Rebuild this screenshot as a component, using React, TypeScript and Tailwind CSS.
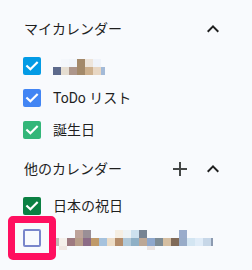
import React from "react";

const Check = () => (
  <svg width="18" height="18" viewBox="0 0 18 18" className="block">
    <path d="M4.2 9.2 L7.4 12.3 L13.9 5.8" fill="none" stroke="#fff" strokeWidth="2.2" strokeLinecap="square" />
  </svg>
);

const Box = ({ color }: { color: string }) => (
  <div className="w-[18px] h-[18px] rounded-[2px] shrink-0" style={{ backgroundColor: color }}>
    <Check />
  </div>
);

const ChevronUp = () => (
  <svg width="24" height="24" viewBox="0 0 24 24" className="block">
    <path d="M12 8l-6 6 1.41 1.41L12 10.83l4.59 4.58L18 14z" fill="#1f1f1f" />
  </svg>
);

const Plus = () => (
  <svg width="24" height="24" viewBox="0 0 24 24" className="block">
    <path d="M19 13h-6v6h-2v-6H5v-2h6V5h2v6h6v2z" fill="#444746" />
  </svg>
);

type R = [number, number, number, number, string];

const m1: R[] = [
  [0, 8, 8, 8, "#5d6a8c"],
  [8, 8, 8, 8, "#e6ded2"],
  [16, 8, 8, 8, "#ad968b"],
  [24, 8, 8, 8, "#a3896a"],
  [32, 8, 8, 8, "#cdb08e"],
  [40, 8, 8, 8, "#e8d7c4"],
  [48, 8, 4, 8, "#a3bad8"],
  [8, 0, 8, 8, "#f4f7fb"],
  [16, 0, 8, 8, "#f1f5fa"],
  [24, 0, 8, 8, "#a3896a"],
  [32, 0, 8, 8, "#ede5dc"],
  [40, 0, 8, 8, "#eff3fa"],
];

const midColors = [
  "#c0bbb5", "#f5f0eb", "#9e7a80", "#b89e8a", "#8c6b86", "#c09a6a", "#a6c2dd", "#ecdcc6",
  "#b48c6a", "#b0c8d8", "#8fb0c6", "#bca796", "#8ea7cc", "#7d8b94", "#d5bea1", "#806a58",
  "#98abc8", "#d3e5f2", "#e0ecf8", "#c7d7e8",
];

const m2: R[] = [
  ...midColors.map((c, i) => [i * 8, 8, 8, 8, c] as R),
  [160, 8, 2, 8, "#8c9ab0"],
  [24, 0, 8, 8, "#bea39a"],
  [32, 0, 8, 8, "#9a8f96"],
  [64, 0, 8, 8, "#f5eee2"],
  [72, 0, 8, 8, "#edf3f5"],
  [80, 0, 8, 8, "#cde1ee"],
  [88, 0, 8, 8, "#768393"],
  [128, 0, 8, 8, "#99abcb"],
  [8, 16, 8, 4, "#f0e7e2"],
  [96, 16, 8, 4, "#ebe3e1"],
];

const Mosaic = ({ rects, w, h }: { rects: R[]; w: number; h: number }) => (
  <svg width={w} height={h} viewBox={`0 0 ${w} ${h}`} className="block" shapeRendering="crispEdges">
    {rects.map(([x, y, rw, rh, c], i) => (
      <rect key={i} x={x} y={y} width={rw} height={rh} fill={c} />
    ))}
  </svg>
);

export default function App() {
  const font = { fontFamily: 'Roboto, "Noto Sans CJK JP", sans-serif' };
  return (
    <div className="w-[252px] h-[270px] bg-[#f8fafd] text-[#1f1f1f] overflow-hidden pt-[9px]" style={font}>
      {/* My calendars header */}
      <div className="h-[40px] mb-[1px] flex items-center pl-[24px] pr-[27px]">
        <span className="text-[14px] flex-1">マイカレンダー</span>
        <ChevronUp />
      </div>
      <div className="h-[32px] flex items-center pl-[23px] gap-[12px]">
        <Box color="#039be5" />
        <div className="mt-[2px]">
          <Mosaic rects={m1} w={52} h={16} />
        </div>
      </div>
      <div className="h-[32px] flex items-center pl-[23px] gap-[12px]">
        <Box color="#4285f4" />
        <span className="text-[14px]">ToDo リスト</span>
      </div>
      <div className="h-[32px] flex items-center pl-[23px] gap-[12px]">
        <Box color="#33b679" />
        <span className="text-[14px]">誕生日</span>
      </div>

      {/* Other calendars header */}
      <div className="h-[40px] mt-[3px] mb-[1px] flex items-center pl-[24px] pr-[27px]">
        <span className="text-[14px] flex-1">他のカレンダー</span>
        <div className="mr-[9px]">
          <Plus />
        </div>
        <ChevronUp />
      </div>
      <div className="h-[32px] flex items-center pl-[23px] gap-[12px]">
        <Box color="#0b8043" />
        <span className="text-[14px]">日本の祝日</span>
      </div>
      <div className="relative h-[32px] flex items-center pl-[23px] gap-[12px]">
        <div className="w-[18px] h-[18px] rounded-[2px] border-2 border-[#7986cb] shrink-0" />
        <div className="mt-[4px] ml-[-2px]">
          <Mosaic rects={m2} w={162} h={20} />
        </div>
        <div className="absolute left-[8px] top-[-6px] w-[48px] h-[44px] border-[7px] border-[#ff1060] rounded-[5px] z-10" />
      </div>
    </div>
  );
}
